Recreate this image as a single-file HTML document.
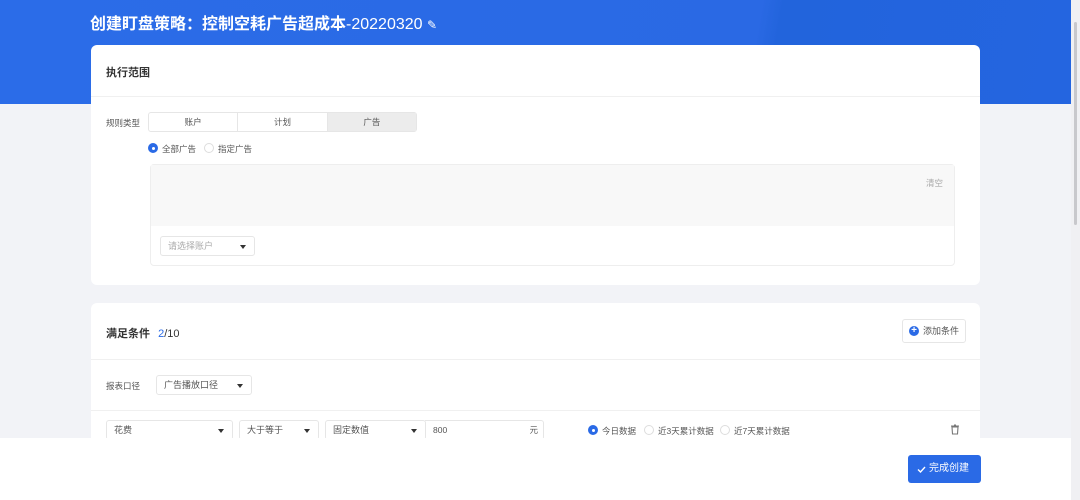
<!DOCTYPE html>
<html><head><meta charset="utf-8"><style>
*{margin:0;padding:0;box-sizing:border-box}
body{width:1080px;height:500px;overflow:hidden;background:#f2f3f7;font-family:"Liberation Sans","Noto Sans CJK SC",sans-serif;position:relative;color:#333}
.abs{position:absolute}
.hdr{left:0;top:0;width:1071px;height:104px;background:linear-gradient(100deg,#2b6ce8 0%,#2a69e4 70%,#2264dc 72%,#2465e0 100%)}
.sb{left:1071px;top:0;width:9px;height:500px;background:#f0f0f3}
.thumb{left:1074px;top:22px;width:3px;height:203px;background:#c8c8cc;border-radius:2px}
.card{background:#fff;border-radius:6px}
.t{font-size:11px;color:#555}
.sel{border:1px solid #e6e6e6;border-radius:3px;background:#fff;font-size:9px;color:#555;height:20px;line-height:18px;padding-left:7px}
.sel:after{content:"";position:absolute;right:8px;top:8px;border:3px solid transparent;border-top:4px solid #333}
.radio{width:10px;height:10px;border-radius:50%;border:1px solid #ddd;background:#fff}
.radio.on{background:#2a6ae6;border-color:#2a6ae6}
.radio.on:after{content:"";position:absolute;left:3px;top:3px;width:3px;height:3px;background:#fff;border-radius:50%}
.s{font-size:8.5px;color:#555}
</style></head><body>
<div class="abs hdr"></div>
<div class="abs sb"></div><div class="abs thumb"></div>
<div class="abs" style="left:90px;top:10px;color:#fff;font-size:16px;font-weight:bold;white-space:nowrap">创建盯盘策略：控制空耗广告超成本<span style="font-weight:normal">-20220320</span> <span style="font-size:12px;font-weight:normal">✎</span></div>

<div class="abs card" style="left:91px;top:45px;width:889px;height:240px"></div>
<div class="abs" style="left:91px;top:96px;width:889px;height:1px;background:#f0f0f0"></div>
<div class="abs" style="left:106px;top:64px;font-size:11px;font-weight:bold;color:#333">执行范围</div>
<div class="abs s" style="left:106px;top:117px">规则类型</div>
<div class="abs" style="left:148px;top:112px;width:269px;height:20px;border:1px solid #e6e6e6;border-radius:3px;display:flex;font-size:8.5px;color:#555">
<div style="flex:1;text-align:center;line-height:18px;border-right:1px solid #e6e6e6">账户</div>
<div style="flex:1;text-align:center;line-height:18px;border-right:1px solid #e6e6e6">计划</div>
<div style="flex:1;text-align:center;line-height:18px;background:#ececec">广告</div></div>
<div class="abs radio on" style="left:148px;top:143px"></div>
<div class="abs s" style="left:162px;top:143px">全部广告</div>
<div class="abs radio" style="left:204px;top:143px"></div>
<div class="abs s" style="left:218px;top:143px">指定广告</div>
<div class="abs" style="left:150px;top:164px;width:805px;height:102px;border:1px solid #eee;border-radius:4px;background:#fff"></div>
<div class="abs" style="left:151px;top:165px;width:803px;height:61px;background:#f8f8f8"></div>
<div class="abs" style="left:926px;top:177px;font-size:8.5px;color:#aaa">清空</div>
<div class="abs sel" style="left:160px;top:236px;width:95px;color:#aaa">请选择账户</div>

<div class="abs card" style="left:91px;top:303px;width:889px;height:197px"></div>
<div class="abs" style="left:91px;top:359px;width:889px;height:1px;background:#f0f0f0"></div>
<div class="abs" style="left:91px;top:410px;width:889px;height:1px;background:#f0f0f0"></div>
<div class="abs" style="left:106px;top:325px;font-size:11px;font-weight:bold;color:#333">满足条件 <span style="font-weight:normal;margin-left:5px"><span style="color:#2a6ae6">2</span>/10</span></div>
<div class="abs" style="left:902px;top:319px;width:64px;height:24px;border:1px solid #e6e6e6;border-radius:3px;font-size:9px;color:#555;line-height:22px;padding-left:20px">添加条件
<span style="position:absolute;left:6px;top:6px;width:10px;height:10px;border-radius:50%;background:#2a6ae6;color:#fff;font-size:10px;line-height:10px;text-align:center;font-weight:bold">+</span></div>
<div class="abs s" style="left:106px;top:380px">报表口径</div>
<div class="abs sel" style="left:156px;top:375px;width:96px">广告播放口径</div>
<div class="abs sel" style="left:106px;top:420px;width:127px">花费</div>
<div class="abs sel" style="left:239px;top:420px;width:80px">大于等于</div>
<div class="abs sel" style="left:325px;top:420px;width:101px">固定数值</div>
<div class="abs" style="left:425px;top:420px;width:119px;height:20px;border:1px solid #e6e6e6;border-left:none;border-radius:0 3px 3px 0;font-size:8.5px;color:#555;line-height:18px;padding-left:8px">800<span style="position:absolute;right:5px">元</span></div>
<div class="abs radio on" style="left:588px;top:425px"></div>
<div class="abs s" style="left:602px;top:425px">今日数据</div>
<div class="abs radio" style="left:644px;top:425px"></div>
<div class="abs s" style="left:658px;top:425px">近3天累计数据</div>
<div class="abs radio" style="left:720px;top:425px"></div>
<div class="abs s" style="left:734px;top:425px">近7天累计数据</div>
<svg class="abs" style="left:950px;top:424px" width="10" height="11" viewBox="0 0 10 11"><path d="M1 2h8M4 1h2M2 3h6l-.5 7h-5z" stroke="#777" fill="none" stroke-width="1.1"/></svg>

<div class="abs" style="left:0;top:438px;width:1071px;height:62px;background:#fff"></div>
<div class="abs" style="left:908px;top:455px;width:73px;height:28px;background:#2a6ae6;border-radius:3px;color:#fff;font-size:10px;line-height:28px;padding-left:21px">完成创建
<svg style="position:absolute;left:9px;top:11px" width="9" height="7" viewBox="0 0 9 7"><path d="M1 3.5l2.5 2.5L8 1" stroke="#fff" fill="none" stroke-width="1.4"/></svg></div>
</body></html>
